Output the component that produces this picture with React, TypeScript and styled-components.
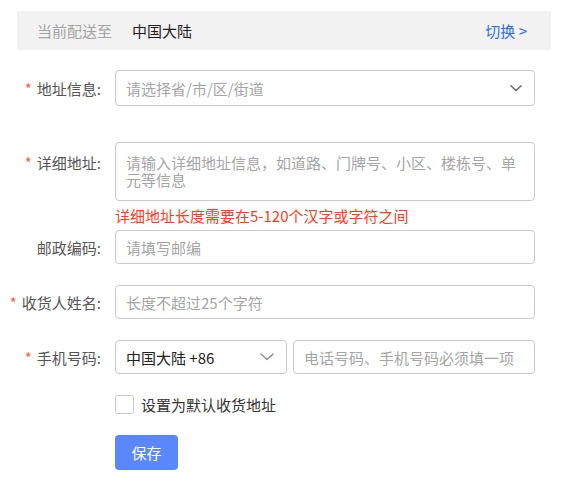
import React from "react";
import styled, { createGlobalStyle } from "styled-components";

const GlobalStyle = createGlobalStyle`
  html, body {
    margin: 0;
    padding: 0;
    background: #fff;
  }
  body {
    font-family: "Noto Sans CJK SC", "Noto Sans", sans-serif;
    color: #333;
  }
  * {
    box-sizing: border-box;
  }
`;

const Page = styled.div`
  width: 572px;
  padding-top: 11px;
`;

const TopBar = styled.div`
  height: 39px;
  margin: 0 21px 0 17px;
  background: #f2f2f2;
  display: flex;
  align-items: center;
  padding: 0 24px 0 20px;
  font-size: 15px;
  line-height: 17px;
`;

const Muted = styled.span`
  color: #a3a3a3;
`;

const Region = styled.span`
  color: #1f1f1f;
  margin-left: 20px;
`;

const SwitchLink = styled.a`
  margin-left: auto;
  color: #2f6fe4;
  cursor: pointer;
`;

const Form = styled.form`
  display: flex;
  flex-direction: column;
  margin-top: 20px;
  font-size: 15px;
  line-height: 17px;
`;

const Row = styled.div<{ $top?: number }>`
  display: grid;
  grid-template-columns: 101px 420px;
  column-gap: 14px;
  margin-top: ${({ $top }) => $top ?? 0}px;
`;

const Label = styled.label<{ $height: number; $alignTop?: boolean }>`
  display: flex;
  justify-content: flex-end;
  align-items: ${({ $alignTop }) => ($alignTop ? "flex-start" : "center")};
  padding-top: ${({ $alignTop }) => ($alignTop ? "12px" : "0")};
  height: ${({ $height }) => $height}px;
  color: #555;
  white-space: nowrap;
`;

const Star = styled.span`
  color: #f2653f;
  margin-right: 5px;
`;

const Field = styled.div`
  display: flex;
  flex-direction: column;
`;

const Box = styled.div<{ $height: number; $width?: number }>`
  display: flex;
  align-items: center;
  height: ${({ $height }) => $height}px;
  width: ${({ $width }) => ($width ? `${$width}px` : "100%")};
  flex: ${({ $width }) => ($width ? "none" : "1")};
  border: 1px solid #c9c8d3;
  border-radius: 4px;
  background: #fff;
  padding: 0 12px 0 10px;
`;

const TextInput = styled.input`
  border: none;
  outline: none;
  width: 100%;
  padding: 0;
  font: inherit;
  color: #333;
  background: transparent;
  &::placeholder {
    color: #a5a5a5;
  }
`;

const TextArea = styled.textarea`
  height: 59px;
  width: 100%;
  border: 1px solid #c9c8d3;
  border-radius: 4px;
  padding: 11px 10px;
  font: inherit;
  line-height: 17px;
  color: #333;
  resize: none;
  outline: none;
  &::placeholder {
    color: #a5a5a5;
  }
`;

const ErrorText = styled.div`
  color: #ff3b1c;
  margin-top: 6px;
  height: 17px;
`;

const Placeholder = styled.span`
  color: #a5a5a5;
  flex: 1;
`;

const Value = styled.span`
  color: #222;
  flex: 1;
`;

const Inline = styled.div`
  display: flex;
  gap: 6px;
`;

const Chevron = ({ color, width, weight }: { color: string; width: number; weight: number }) => (
  <svg width={width} height={width * 0.55} viewBox="0 0 12 6.6" fill="none">
    <polyline
      points="0.8,0.8 6,5.6 11.2,0.8"
      stroke={color}
      strokeWidth={weight}
      strokeLinecap="round"
      strokeLinejoin="round"
    />
  </svg>
);

const CheckRow = styled.label`
  display: flex;
  align-items: center;
  gap: 7px;
  color: #333;
  cursor: pointer;
`;

const CheckBox = styled.span`
  width: 19px;
  height: 19px;
  border: 1px solid #c9c8d3;
  border-radius: 3px;
  background: #fff;
`;

const SaveButton = styled.button`
  width: 63px;
  height: 35px;
  border: none;
  border-radius: 4px;
  background: #5a88fa;
  color: #fff;
  font: inherit;
  cursor: pointer;
  padding: 0;
`;

export default function App() {
  return (
    <>
      <GlobalStyle />
      <Page>
        <TopBar>
          <Muted>当前配送至</Muted>
          <Region>中国大陆</Region>
          <SwitchLink>切换 &gt;</SwitchLink>
        </TopBar>

        <Form onSubmit={(e) => e.preventDefault()}>
          <Row>
            <Label $height={36}>
              <Star>*</Star>地址信息:
            </Label>
            <Box $height={36}>
              <Placeholder>请选择省/市/区/街道</Placeholder>
              <Chevron color="#6f6f6f" width={12} weight={1.5} />
            </Box>
          </Row>

          <Row $top={36}>
            <Label $height={59} $alignTop>
              <Star>*</Star>详细地址:
            </Label>
            <Field>
              <TextArea placeholder="请输入详细地址信息，如道路、门牌号、小区、楼栋号、单元等信息" />
              <ErrorText>详细地址长度需要在5-120个汉字或字符之间</ErrorText>
            </Field>
          </Row>

          <Row $top={6}>
            <Label $height={34}>邮政编码:</Label>
            <Box $height={34}>
              <TextInput placeholder="请填写邮编" />
            </Box>
          </Row>

          <Row $top={21}>
            <Label $height={34}>
              <Star>*</Star>收货人姓名:
            </Label>
            <Box $height={34}>
              <TextInput placeholder="长度不超过25个字符" />
            </Box>
          </Row>

          <Row $top={21}>
            <Label $height={34}>
              <Star>*</Star>手机号码:
            </Label>
            <Inline>
              <Box $height={34} $width={172}>
                <Value>中国大陆 +86</Value>
                <Chevron color="#8a8a8a" width={14} weight={1.1} />
              </Box>
              <Box $height={34}>
                <TextInput placeholder="电话号码、手机号码必须填一项" />
              </Box>
            </Inline>
          </Row>

          <Row $top={21}>
            <span />
            <CheckRow>
              <CheckBox />
              设置为默认收货地址
            </CheckRow>
          </Row>

          <Row $top={21}>
            <span />
            <div>
              <SaveButton type="submit">保存</SaveButton>
            </div>
          </Row>
        </Form>
      </Page>
    </>
  );
}
